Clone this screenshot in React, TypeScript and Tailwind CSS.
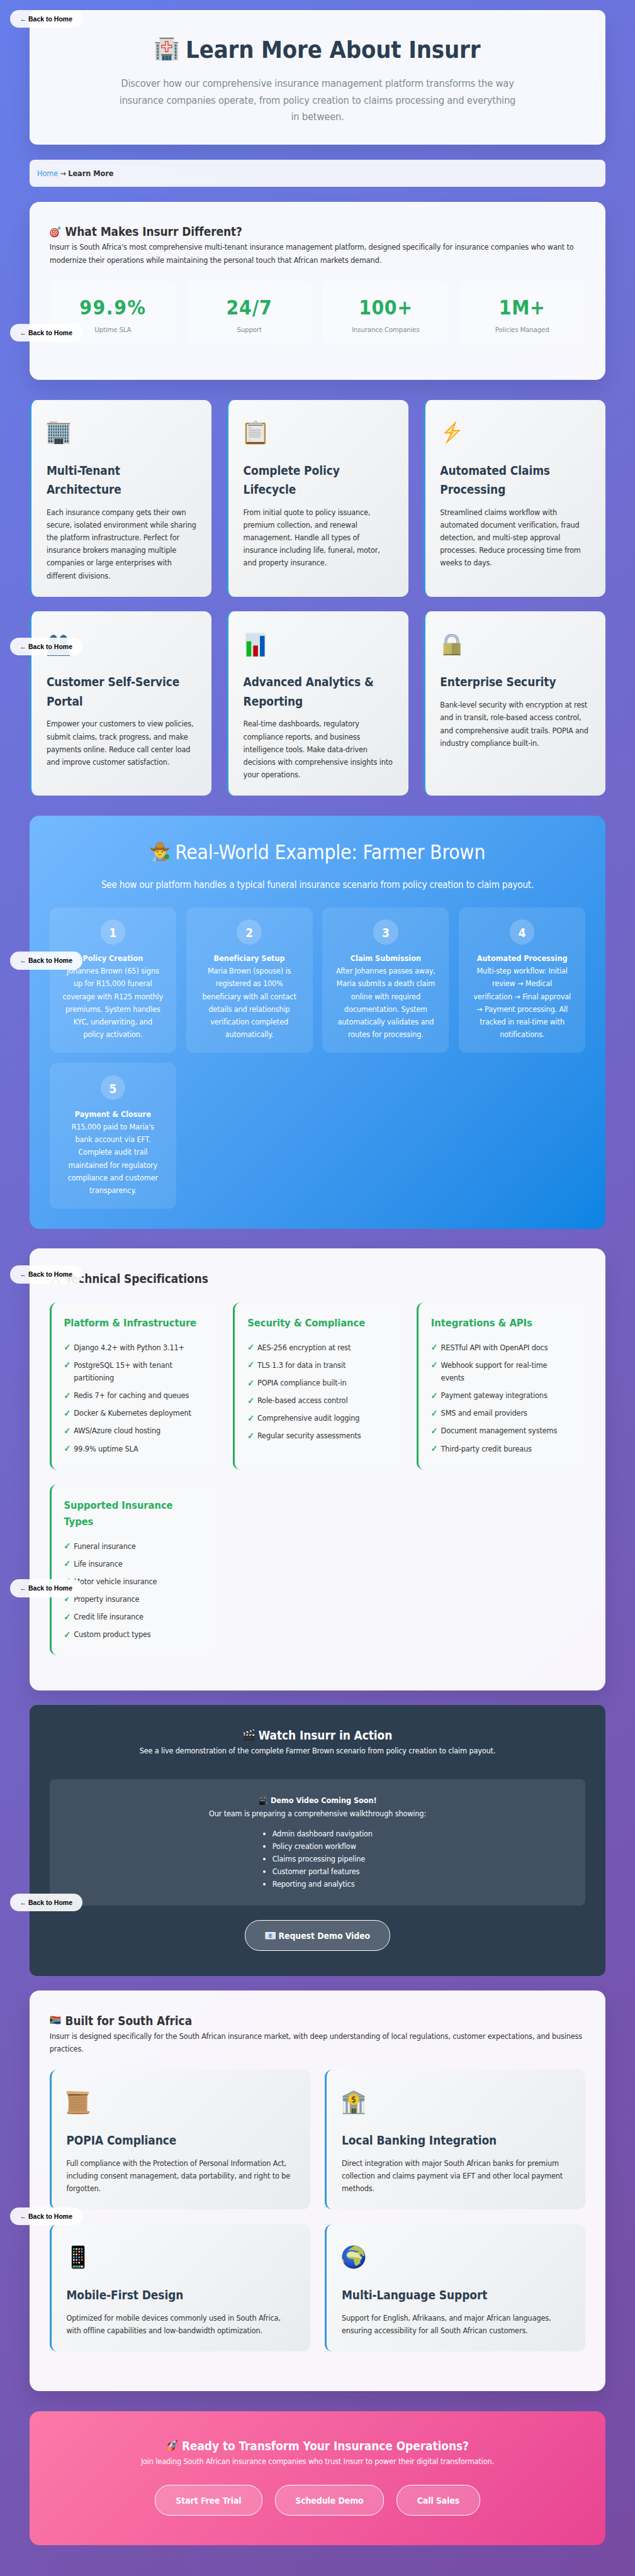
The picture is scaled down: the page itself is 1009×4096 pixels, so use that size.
import type { ReactNode } from "react";

/* Typography helpers: regular and bold text blocks */
const REG = "pt-[0.05em] -mb-[0.05em] tracking-[-0.0128em] whitespace-nowrap";
const BOLD = "pt-[0.05em] -mb-[0.05em] tracking-[-0.003em] font-bold whitespace-nowrap";
const PANEL = "rounded-[20px] bg-white/95 p-10 shadow-[0_20px_40px_rgba(0,0,0,0.1)]";

function Lines({ lines }: { lines: string[] }) {
  return (
    <>
      {lines.map((l) => (
        <span key={l} className="block">
          {l}
        </span>
      ))}
    </>
  );
}

function Icon({ children, className = "h-[1em] w-[1em] align-[-0.12em]" }: { children: ReactNode; className?: string }) {
  return (
    <svg viewBox="0 0 48 48" className={`inline-block ${className}`} aria-hidden="true">
      {children}
    </svg>
  );
}

const range = (n: number) => Array.from({ length: n }, (_, i) => i);

function Hospital() {
  return (
    <Icon>
      <rect x="1.5" y="11" width="9" height="36" fill="#c9c8c3" />
      <rect x="37.5" y="11" width="9" height="36" fill="#c9c8c3" />
      <rect x="0.8" y="10" width="10" height="2" fill="#77726e" />
      <rect x="37.2" y="10" width="10" height="2" fill="#77726e" />
      <rect x="10" y="2" width="28" height="45" fill="#dddcd7" />
      <rect x="9.5" y="1" width="29" height="2.4" fill="#746f6b" />
      {range(5).map((i) => (
        <g key={i} fill="#3d7390">
          <rect x="4.3" y={15 + i * 6.2} width="3.4" height="4.6" />
          <rect x="40.3" y={15 + i * 6.2} width="3.4" height="4.6" />
        </g>
      ))}
      <path d="M21.5 8.8h5v7.7h7.7v5h-7.7v7.7h-5v-7.7h-7.7v-5h7.7z" fill="#f3e9e6" stroke="#e3303a" strokeWidth="1.7" />
      <rect x="13" y="34.5" width="22" height="3" fill="#6b6560" />
      <rect x="14.5" y="37.5" width="19" height="9.5" fill="#2f6079" />
      <path d="M20.5 37.5v9.5M27.5 37.5v9.5" stroke="#7fa0ad" strokeWidth="1" />
    </Icon>
  );
}

function Target() {
  return (
    <Icon>
      <ellipse cx="19" cy="28" rx="18" ry="18.5" fill="#c3241f" />
      <ellipse cx="18" cy="27" rx="13.5" ry="14" fill="#f3efec" />
      <ellipse cx="18" cy="27" rx="10" ry="10.5" fill="#cf2a25" />
      <ellipse cx="18" cy="27" rx="6.5" ry="7" fill="#f3efec" />
      <ellipse cx="18" cy="27" rx="3.4" ry="3.6" fill="#cf2a25" />
      <path d="M18 27 38 11" stroke="#d9a12c" strokeWidth="3" />
      <path d="M32 16l2-9 6-6 1 6 6 1-6 6z" fill="#3fb9c6" />
    </Icon>
  );
}

function Office() {
  return (
    <Icon>
      <rect x="6" y="1.4" width="15" height="4" fill="#cfc6c0" />
      <rect x="2" y="6" width="44.5" height="41" fill="#d5d1cf" />
      <rect x="0.8" y="4.6" width="46.5" height="2.4" fill="#8a807c" />
      {range(6).map((r) =>
        range(9).map((c) => (
          <rect key={`${r}-${c}`} x={3.8 + c * 4.65} y={9 + r * 6} width="3" height="4.7" fill={r === 5 ? "#24475c" : "#38708f"} />
        )),
      )}
      <rect x="14" y="33.5" width="21" height="13.5" fill="#bdb8b5" />
      <rect x="13.5" y="33" width="22" height="3.4" fill="#8c8785" />
      <rect x="16" y="36.5" width="17" height="10.5" fill="#243f4f" />
      <path d="M21.7 36.5v10.5M27.4 36.5v10.5" stroke="#76888f" strokeWidth="0.9" />
    </Icon>
  );
}

function Clipboard() {
  return (
    <Icon>
      <rect x="3.5" y="3.7" width="41" height="44" rx="3" fill="#b9873f" />
      <rect x="6.5" y="7" width="35" height="36" fill="#e9e9e9" />
      <rect x="6.5" y="43" width="35" height="3.5" fill="#7d4d1d" />
      <circle cx="24" cy="3.4" r="2.8" fill="none" stroke="#9eabb8" strokeWidth="1.4" />
      <path d="M11 4.5h26l2 4.5H9z" fill="#b7c3cb" />
      <path d="M9 9h30v1.2H9z" fill="#7a5f45" />
      <path d="M10 14h5.5" stroke="#aaa" strokeWidth="1.6" />
      {range(9).map((i) => (
        <path key={i} d={`M10 ${17.5 + i * 2}h${i % 3 === 1 ? 26 : 24}`} stroke="#c3c3c3" strokeWidth="1.3" />
      ))}
      <path d="M10 38h4M10 40.5h8" stroke="#c3c3c3" strokeWidth="1" />
    </Icon>
  );
}

function Bolt() {
  return (
    <Icon>
      <path d="M33.5 0 8 26l14-.5L10.500 48 42 18.500l-15.500 1z" fill="#fb9f0c" />
      <path d="M29 8 13.500 23.500l13-.8L17 39 36.500 21l-14 .8z" fill="#ffe88c" />
    </Icon>
  );
}

function People() {
  return (
    <Icon>
      <g fill="#3a6b96">
        <ellipse cx="14" cy="15" rx="8" ry="11" />
        <ellipse cx="34" cy="15" rx="8" ry="11" />
        <path d="M1 47c0-13 3-19 13-19s13 6 13 19zM21 47c0-13 3-19 13-19s13 6 13 19z" />
      </g>
    </Icon>
  );
}

function BarChart() {
  return (
    <Icon>
      <rect x="4" y="0.5" width="40" height="47.5" fill="#dbe6ee" />
      <path d="M4 5h40M4 10h40M4 15h40M4 20h40M4 25h40M4 30h40M4 35h40M4 40h40M9 .5v47M14 .5v47M19 .5v47M24 .5v47M29 .5v47M34 .5v47M39 .5v47" stroke="#c3d3df" strokeWidth="0.6" />
      <rect x="6" y="17.5" width="9.5" height="30.5" fill="#0cb817" />
      <rect x="19.5" y="26" width="9.5" height="22" fill="#bf0505" />
      <rect x="33" y="6.5" width="9.5" height="41.5" fill="#0559bd" />
    </Icon>
  );
}

function Lock() {
  return (
    <Icon>
      <defs>
        <linearGradient id="lockBody">
          <stop offset="0" stopColor="#c9c06a" />
          <stop offset="0.48" stopColor="#bdb566" />
          <stop offset="0.52" stopColor="#9c9450" />
          <stop offset="1" stopColor="#a99f59" />
        </linearGradient>
      </defs>
      <path d="M12 23V18.500C12 9 17 5.500 24 5.500S36 9 36 18.500V23" fill="none" stroke="#7e90ac" strokeWidth="5" />
      <path d="M12 23V18.500C12 9 17 5.500 24 5.500S36 9 36 18.500V23" fill="none" stroke="#bcd3ef" strokeWidth="2.6" />
      <rect x="7" y="21" width="34.5" height="24" rx="1" fill="url(#lockBody)" />
      <path d="M7 44.500h34.500" stroke="#5f4b22" strokeWidth="1.6" />
    </Icon>
  );
}

function Farmer() {
  return (
    <Icon>
      <path d="M7 48c1-7 5-10 11-11h12c6 1 10 4 11 11z" fill="#a9cbd6" />
      <path d="M15 48v-9l3-2 3 6h7l3-6 3 2v9z" fill="#6b8fc0" />
      <path d="M19 33h11v6c-3 4-8 4-11 0z" fill="#e5a521" />
      <ellipse cx="24.5" cy="26" rx="13.5" ry="13" fill="#fbc834" />
      <path d="M11 20c2-2 6-4 13-4s11 2 13 4l-1 5c-3-4-6-5-12-5s-9 1-12 5z" fill="#7a4c1c" />
      <path d="M1 14c5 3 9 3 11 2C14 7 17 1 24.500 1S35 7 37 16c3 1 7 0 11-2-2 8-7 10-11 9-4-3-21-3-25 0C7 24 2 21 1 14z" fill="#96692d" />
      <path d="M13 13c3-8 5-11 11.500-11S33 5 36 13c-6 3-17 3-23 0z" fill="#bf8d3e" />
      <circle cx="19" cy="25" r="1.6" fill="#4b3312" />
      <circle cx="30" cy="25" r="1.6" fill="#4b3312" />
      <path d="M21 31.500q3.500 1.500 7 0" stroke="#5d3913" strokeWidth="1.3" fill="none" />
      <path d="M33 42c2-2 7-2 9 0l-3 6h-7z" fill="#ee6a22" />
      <path d="M34 40c0-4 4-9 8-9l2-1 1 3 3 1-2 4 1 3-6 2z" fill="#2f9b3a" />
    </Icon>
  );
}

function Tools() {
  return (
    <Icon>
      <path d="M6 45 34 10M42 45 14 10" stroke="#5b5f63" strokeWidth="5" />
      <path d="M6 10 16 2l8 6-8 8zM34 3l4 6 7-1c0 6-5 9-10 8z" fill="#5b5f63" />
    </Icon>
  );
}

function Clapper() {
  return (
    <Icon>
      <rect x="4" y="22" width="42" height="25" rx="1.5" fill="#2a2a2a" />
      <rect x="4" y="22" width="42" height="6" fill="#e8e8e8" />
      <path d="M6 28l4-6h6l-4 6zM18 28l4-6h6l-4 6zM30 28l4-6h6l-4 6z" fill="#222" />
      <path d="M2 14 44 2l1.500 6L4 21z" fill="#e8e8e8" />
      <path d="M5 13l7-2 5 6-7 2zM19 9l7-2 5 6-7 2zM32 5.500l7-2 5 6-7 2z" fill="#222" />
      <path d="M8 34h34M8 40h34" stroke="#555" strokeWidth="1.5" />
    </Icon>
  );
}

function Camera() {
  return (
    <Icon className="h-[20px] w-[20px] align-[-4px]">
      <circle cx="14" cy="11" r="10" fill="#343a40" stroke="#7f8a92" strokeWidth="1.5" />
      <circle cx="33" cy="10" r="9" fill="#343a40" stroke="#7f8a92" strokeWidth="1.5" />
      <circle cx="14" cy="11" r="4" fill="#9aa4ab" />
      <circle cx="33" cy="10" r="4" fill="#9aa4ab" />
      <path d="M8 20h28v12l10-6v20l-10-5v5H10l-4-8z" fill="#23282d" />
      <path d="M10 22h24v5H10z" fill="#7b868e" />
      <path d="M38 31l7-4v18l-7-4z" fill="#7b868e" />
      <ellipse cx="17" cy="39" rx="11" ry="7" fill="#15181b" />
    </Icon>
  );
}

function Email() {
  return (
    <Icon className="h-[22px] w-[22px] align-[-4px]">
      <rect x="1" y="8" width="46" height="32" rx="1.5" fill="#e4e6e9" />
      <path d="M1 40 18 23M47 40 30 23" stroke="#b9bec4" strokeWidth="1.5" />
      <path d="M1 9l23 20L47 9" fill="#f2f3f5" stroke="#b9bec4" strokeWidth="1.5" />
      <rect x="15" y="13" width="18" height="22" fill="#aecdf0" />
      <text x="24" y="32" textAnchor="middle" fontSize="21" fontWeight="700" fill="#2f7fd6">
        E
      </text>
    </Icon>
  );
}

function Flag() {
  return (
    <Icon>
      <path d="M2 8q11-3 21 0t21 0v15H2z" fill="#d9392f" />
      <path d="M2 23h42v15q-11 3-21 0t-21 0z" fill="#1f3c93" />
      <path d="M2 9 22 19h22v9H22L2 38z" fill="#f3f3f3" />
      <path d="M2 9 21 21h23v5H21L2 38z" fill="#1b8a4d" />
      <path d="M2 13l15 10.500L2 34z" fill="#f0b63a" />
      <path d="M2 16l11 7.500L2 31z" fill="#151515" />
    </Icon>
  );
}

function Scroll() {
  return (
    <Icon>
      <path d="M3 4h40l-.5 36 1 3H4c2-12 1-24-1-36z" fill="#c79763" />
      <path d="M1 4c0-3 2-3 4-3 12 1 26 1 41 2v4C30 8 16 6 3 7.500 1 7.500 1 6 1 4z" fill="#d9ad78" />
      <path d="M4 7.500c13-1 27 1 40 0v2c-13 1-27 0-40 1z" fill="#80532d" />
      <path d="M2 43c13 1 27-1 44-1l1.500-1v3c0 1-1 2-2 3-15 1-29 0-43 0z" fill="#cf9b63" />
      <path d="M3 46.700c15 .5 28 .5 42 0" stroke="#8a5a2f" strokeWidth="1" />
      {range(8).map((i) => (
        <path key={i} d={`M7 ${14 + i * 3.6}q8 1 16 0t16 0`} stroke="#a47648" strokeWidth="0.9" fill="none" />
      ))}
    </Icon>
  );
}

function Bank() {
  return (
    <Icon>
      <path d="M24 1 46 12v4H2v-4z" fill="#9fb1b5" />
      <path d="M24 1 46 12H2z" fill="none" stroke="#71868b" strokeWidth="1.3" />
      <rect x="4" y="16" width="40" height="29" fill="#8b9fa5" />
      <path d="M2 16h44v4.500H2zM2 45h44v2.500H2z" fill="#7b9096" />
      {[3.5, 12, 31.5, 40].map((x) => (
        <rect key={x} x={x} y="22" width="4.5" height="23.5" fill="#eef1f2" stroke="#98a8ac" strokeWidth="0.5" />
      ))}
      <rect x="18" y="34.5" width="12.5" height="12" fill="#d6a91e" />
      <rect x="19.7" y="36" width="9" height="10.5" fill="#2e5563" />
      <path d="M24.200 36v10.500" stroke="#d6a91e" />
      <circle cx="24" cy="18" r="11.3" fill="#f3cb2d" stroke="#d29f17" strokeWidth="0.8" />
      <text x="24" y="24" textAnchor="middle" fontSize="17" fontWeight="700" fill="#72541a">
        $
      </text>
    </Icon>
  );
}

const APP_COLORS = ["#5bd75b", "#ffffff", "#e59df0", "#9a9a9a", "#35b6f2", "#777777", "#e8b48a", "#42cbe0", "#f5e956", "#ffffff", "#ef6565", "#666666", "#42d9e0", "#c44de0", "#35b6f2", "#f28c1c", "#ffffff", "#f5e956", "#777777", "#999999", "#35b6f2", "#ef6565", "#ffffff"];

function Phone() {
  return (
    <Icon>
      <rect x="11" y="0.5" width="26.5" height="47" rx="3" fill="#6c6c6c" />
      <rect x="11.8" y="1.2" width="25" height="45.6" rx="2.4" fill="#050505" />
      {APP_COLORS.map((c, i) => (
        <rect key={i} x={14 + (i % 4) * 5.4} y={6 + Math.floor(i / 4) * 5.5} width="3.2" height="3.4" rx="0.6" fill={c} />
      ))}
      <rect x="13" y="40.5" width="22.5" height="5" fill="#4a4a4a" />
      {["#5bd75b", "#35b6f2", "#5bd75b", "#ffffff"].map((c, i) => (
        <rect key={i} x={14 + i * 5.4} y="41.5" width="3.2" height="3.4" rx="0.6" fill={c} />
      ))}
    </Icon>
  );
}

function Globe() {
  return (
    <Icon>
      <defs>
        <radialGradient id="sea" cx="0.4" cy="0.4" r="0.65">
          <stop offset="0" stopColor="#3f83e8" />
          <stop offset="0.7" stopColor="#1f4fc4" />
          <stop offset="1" stopColor="#112a7c" />
        </radialGradient>
      </defs>
      <circle cx="24" cy="24" r="23.5" fill="url(#sea)" />
      <path d="M10 19c1-4 5-6 9-6 4-1 7 1 10 2l5 0 3 7 4 2c-1 4-4 6-5 9-1 4-3 8-7 8-3-1-3-6-4-9 0-3-2-5-5-5s-6 0-8-3c-2-2-2-3-2-5z" fill="#e6e8a0" />
      <path d="M10 22c4 3 9 1 14 2s10 1 15 2c-2 3-3 4-4 7-1 4-3 8-6 8-3-1-3-6-4-9 0-3-2-5-5-5s-8-1-10-5z" fill="#b3c648" />
      <path d="M15 9c3-3 7-6 12-8 6 1 12 4 16 10 2 4 3 8 3 11l-3 0-3-4-3 0 1 3-3-1-3-6c-3 0-4-1-6-2-3-2-5-1-7 0l-4-1z" fill="#b9c153" />
      <path d="M17 11.500c4-2 6 0 9 .5s6 1 8 1" stroke="#2a60cc" strokeWidth="1.7" fill="none" />
      <path d="M.8 27c3 1 5 5 3.500 10C2 34 .8 31 .8 27zM36 34l2-2-1 6-1.500 1z" fill="#d1bd38" />
    </Icon>
  );
}

function Rocket() {
  return (
    <Icon>
      <path d="M6 44c-3-1 2-12 6-16l9 9c-4 4-9 7-15 7z" fill="#f7a11b" />
      <path d="M14 22 4 26l6-12 12-3zM25 36l-2 11 11-8 3-12z" fill="#b7241f" />
      <path d="M12 29C16 16 26 6 46 2c-3 20-13 30-26 34z" fill="#7d8a98" />
      <path d="M12 29C16 16 26 6 46 2L16 33z" fill="#d3dae1" />
      <path d="M37 4l9-2-2 9c-3 0-7-4-7-7z" fill="#c42a22" />
      <circle cx="30" cy="17" r="4.5" fill="#2d6da3" stroke="#59636d" strokeWidth="1.5" />
    </Icon>
  );
}

interface Feature {
  icon: ReactNode;
  title: string[];
  lines: string[];
}

const features: Feature[] = [
  { icon: <Office />, title: ["Multi-Tenant", "Architecture"], lines: ["Each insurance company gets their own", "secure, isolated environment while sharing", "the platform infrastructure. Perfect for", "insurance brokers managing multiple", "companies or large enterprises with", "different divisions."] },
  { icon: <Clipboard />, title: ["Complete Policy", "Lifecycle"], lines: ["From initial quote to policy issuance,", "premium collection, and renewal", "management. Handle all types of", "insurance including life, funeral, motor,", "and property insurance."] },
  { icon: <Bolt />, title: ["Automated Claims", "Processing"], lines: ["Streamlined claims workflow with", "automated document verification, fraud", "detection, and multi-step approval", "processes. Reduce processing time from", "weeks to days."] },
  { icon: <People />, title: ["Customer Self-Service", "Portal"], lines: ["Empower your customers to view policies,", "submit claims, track progress, and make", "payments online. Reduce call center load", "and improve customer satisfaction."] },
  { icon: <BarChart />, title: ["Advanced Analytics &", "Reporting"], lines: ["Real-time dashboards, regulatory", "compliance reports, and business", "intelligence tools. Make data-driven", "decisions with comprehensive insights into", "your operations."] },
  { icon: <Lock />, title: ["Enterprise Security"], lines: ["Bank-level security with encryption at rest", "and in transit, role-based access control,", "and comprehensive audit trails. POPIA and", "industry compliance built-in."] },
];

const localFeatures: Feature[] = [
  { icon: <Scroll />, title: ["POPIA Compliance"], lines: ["Full compliance with the Protection of Personal Information Act,", "including consent management, data portability, and right to be", "forgotten."] },
  { icon: <Bank />, title: ["Local Banking Integration"], lines: ["Direct integration with major South African banks for premium", "collection and claims payment via EFT and other local payment", "methods."] },
  { icon: <Phone />, title: ["Mobile-First Design"], lines: ["Optimized for mobile devices commonly used in South Africa,", "with offline capabilities and low-bandwidth optimization."] },
  { icon: <Globe />, title: ["Multi-Language Support"], lines: ["Support for English, Afrikaans, and major African languages,", "ensuring accessibility for all South African customers."] },
];

const stats = [
  { value: "99.9%", label: "Uptime SLA", track: "tracking-[0.05em]" },
  { value: "24/7", label: "Support", track: "tracking-[0.03em]" },
  { value: "100+", label: "Insurance Companies", track: "tracking-[0.02em]" },
  { value: "1M+", label: "Policies Managed", track: "tracking-[0.02em]" },
];

const steps = [
  { title: "Policy Creation", lines: ["Johannes Brown (65) signs", "up for R15,000 funeral", "coverage with R125 monthly", "premiums. System handles", "KYC, underwriting, and", "policy activation."] },
  { title: "Beneficiary Setup", lines: ["Maria Brown (spouse) is", "registered as 100%", "beneficiary with all contact", "details and relationship", "verification completed", "automatically."] },
  { title: "Claim Submission", lines: ["After Johannes passes away,", "Maria submits a death claim", "online with required", "documentation. System", "automatically validates and", "routes for processing."] },
  { title: "Automated Processing", lines: ["Multi-step workflow: Initial", "review → Medical", "verification → Final approval", "→ Payment processing. All", "tracked in real-time with", "notifications."] },
  { title: "Payment & Closure", lines: ["R15,000 paid to Maria's", "bank account via EFT.", "Complete audit trail", "maintained for regulatory", "compliance and customer", "transparency."] },
];

const specs = [
  { title: ["Platform & Infrastructure"], items: [["Django 4.2+ with Python 3.11+"], ["PostgreSQL 15+ with tenant", "partitioning"], ["Redis 7+ for caching and queues"], ["Docker & Kubernetes deployment"], ["AWS/Azure cloud hosting"], ["99.9% uptime SLA"]] },
  { title: ["Security & Compliance"], items: [["AES-256 encryption at rest"], ["TLS 1.3 for data in transit"], ["POPIA compliance built-in"], ["Role-based access control"], ["Comprehensive audit logging"], ["Regular security assessments"]] },
  { title: ["Integrations & APIs"], items: [["RESTful API with OpenAPI docs"], ["Webhook support for real-time", "events"], ["Payment gateway integrations"], ["SMS and email providers"], ["Document management systems"], ["Third-party credit bureaus"]] },
  { title: ["Supported Insurance", "Types"], items: [["Funeral insurance"], ["Life insurance"], ["Motor vehicle insurance"], ["Property insurance"], ["Credit life insurance"], ["Custom product types"]] },
];

const demoTopics = ["Admin dashboard navigation", "Policy creation workflow", "Claims processing pipeline", "Customer portal features", "Reporting and analytics"];

function FeatureCard({ icon, title, lines }: Feature) {
  return (
    <div className="rounded-[15px] border-l-[5px] border-[#3498db] bg-linear-135 from-[#f8f9fa] to-[#e9ecef] p-[30px]">
      <div className="h-[76.8px] text-[48px] leading-[76.8px]">{icon}</div>
      <h3 className={`mt-[15px] text-[24px] leading-[38.4px] text-[#2c3e50] ${BOLD}`}>
        <Lines lines={title} />
      </h3>
      <p className={`mt-[15px] ${REG}`}>
        <Lines lines={lines} />
      </p>
    </div>
  );
}

function PillButton({ children, className }: { children: ReactNode; className: string }) {
  return (
    <button className={`flex h-[62.2px] items-center justify-center rounded-[30px] border-2 border-white bg-white/20 text-[17.6px] leading-[28.2px] text-white ${className}`}>
      <span className={BOLD}>{children}</span>
    </button>
  );
}

export default function App() {
  return (
    <div className="relative h-[5195px] overflow-hidden bg-linear-135 from-[#667eea] to-[#764ba2] px-[60px] pt-5 font-['DejaVu_Sans_Condensed','DejaVu_Sans',sans-serif] text-[16px] leading-[25.6px] text-[#333] [font-stretch:condensed] [zoom:0.7884]">
      <header className="rounded-[15px] bg-white/95 p-10 text-center shadow-[0_20px_40px_rgba(0,0,0,0.1)]">
        <h1 className={`text-[48px] leading-[76.8px] text-[#2c3e50] ${BOLD}`}>
          <Hospital /> Learn More About Insurr
        </h1>
        <p className={`mt-[15px] text-[20.8px] leading-[33.28px] text-[#7f8c8d] ${REG}`}>
          <Lines lines={["Discover how our comprehensive insurance management platform transforms the way", "insurance companies operate, from policy creation to claims processing and everything", "in between."]} />
        </p>
      </header>

      <nav className="mt-[30px] rounded-[10px] bg-white/90 p-[15px]">
        <div className={REG}>
          <a className="text-[#3498db]">Home</a> → <strong className="tracking-[-0.003em]">Learn More</strong>
        </div>
      </nav>

      <section className={`mt-[30px] ${PANEL}`}>
        <h2 className={`text-[24px] leading-[38.4px] ${BOLD}`}>
          <Target /> What Makes Insurr Different?
        </h2>
        <p className={REG}>
          <Lines lines={["Insurr is South Africa's most comprehensive multi-tenant insurance management platform, designed specifically for insurance companies who want to", "modernize their operations while maintaining the personal touch that African markets demand."]} />
        </p>
        <div className="mt-[30px] mb-[30px] grid grid-cols-4 gap-5">
          {stats.map((s) => (
            <div key={s.label} className="rounded-[15px] bg-white/30 p-5 text-center">
              <div className={`-mb-[0.05em] pt-[0.05em] text-[40px] leading-[64px] font-bold text-[#27ae60] ${s.track}`}>{s.value}</div>
              <div className={`text-[14.4px] leading-[25.6px] text-[#7f8c8d] ${REG}`}>{s.label}</div>
            </div>
          ))}
        </div>
      </section>

      <section className="mt-10 grid grid-cols-3 gap-[30px]">
        {features.map((f) => (
          <FeatureCard key={f.title[0]} {...f} />
        ))}
      </section>

      <section className="mt-10 rounded-[20px] bg-linear-135 from-[#74b9ff] to-[#0984e3] p-10 text-center text-white">
        <h2 className="-mb-[0.05em] pt-[0.05em] text-[40px] leading-[64px] tracking-[-0.005em]">
          <Farmer /> Real-World Example: Farmer Brown
        </h2>
        <p className={`mt-5 text-[19.2px] leading-[30.7px] ${REG}`}>See how our platform handles a typical funeral insurance scenario from policy creation to claim payout.</p>
        <div className="mt-[30px] grid grid-cols-4 gap-5">
          {steps.map((s, i) => (
            <div key={s.title} className="rounded-[15px] bg-white/10 p-[25px]">
              <div className="mx-auto flex size-[50px] items-center justify-center rounded-full bg-white/20 text-[24px]">
                <span className={BOLD}>{i + 1}</span>
              </div>
              <h4 className={`mt-[15px] ${BOLD}`}>{s.title}</h4>
              <p className={`flex flex-col items-center ${REG}`}>
                <Lines lines={s.lines} />
              </p>
            </div>
          ))}
        </div>
      </section>

      <section className={`mt-10 ${PANEL}`}>
        <h2 className={`text-[24px] leading-[38.4px] ${BOLD}`}>
          <Tools /> Technical Specifications
        </h2>
        <div className="mt-[30px] mb-[30px] grid grid-cols-3 gap-[30px]">
          {specs.map((s) => (
            <div key={s.title[0]} className="rounded-[15px] border-l-4 border-[#27ae60] bg-[#f8f9fa] p-[25px]">
              <h3 className={`text-[20.8px] leading-[33.28px] text-[#27ae60] ${BOLD}`}>
                <Lines lines={s.title} />
              </h3>
              <ul className="mt-[15px]">
                {s.items.map((item) => (
                  <li key={item[0]} className="flex py-[5px]">
                    <span className="w-5 shrink-0 text-[18px] font-bold text-[#27ae60] [-webkit-text-stroke:0.7px_#27ae60]">✓</span>
                    <span className={REG}>
                      <Lines lines={item} />
                    </span>
                  </li>
                ))}
              </ul>
            </div>
          ))}
        </div>
      </section>

      <section className="mt-[30px] rounded-[15px] bg-[#2c3e50] p-10 pb-[50px] text-center text-white">
        <h2 className={`text-[24px] leading-[38.4px] ${BOLD}`}>
          <Clapper /> Watch Insurr in Action
        </h2>
        <p className={REG}>See a live demonstration of the complete Farmer Brown scenario from policy creation to claim payout.</p>
        <div className="mt-[45.5px] rounded-[10px] bg-white/10 p-[30px]">
          <h4 className={BOLD}>
            <Camera /> Demo Video Coming Soon!
          </h4>
          <p className={REG}>Our team is preparing a comprehensive walkthrough showing:</p>
          <ul className={`mx-auto mt-[15px] w-[222px] list-disc pl-5 text-left ${REG}`}>
            {demoTopics.map((t) => (
              <li key={t}>{t}</li>
            ))}
          </ul>
        </div>
        <div className="mt-[30px] flex justify-center">
          <PillButton className="w-[294px]">
            <Email /> Request Demo Video
          </PillButton>
        </div>
      </section>

      <section className={`mt-[30px] ${PANEL}`}>
        <h2 className={`text-[24px] leading-[38.4px] ${BOLD}`}>
          <Flag /> Built for South Africa
        </h2>
        <p className={REG}>
          <Lines lines={["Insurr is designed specifically for the South African insurance market, with deep understanding of local regulations, customer expectations, and business", "practices."]} />
        </p>
        <div className="mt-[30px] mb-10 grid grid-cols-2 gap-[30px]">
          {localFeatures.map((f) => (
            <FeatureCard key={f.title[0]} {...f} />
          ))}
        </div>
      </section>

      <section className="mt-10 rounded-[20px] bg-linear-135 from-[#fd79a8] to-[#e84393] px-10 pt-[50px] pb-[60px] text-center text-white">
        <h2 className={`text-[24px] leading-[38.4px] ${BOLD}`}>
          <Rocket /> Ready to Transform Your Insurance Operations?
        </h2>
        <p className={REG}>Join leading South African insurance companies who trust Insurr to power their digital transformation.</p>
        <div className="mt-[35px] flex justify-center gap-[25px]">
          <PillButton className="w-[217px]">Start Free Trial</PillButton>
          <PillButton className="w-[220px]">Schedule Demo</PillButton>
          <PillButton className="w-[169px]">Call Sales</PillButton>
        </div>
      </section>

      {/* Floating navigation pill, one per viewport height */}
      <div className="absolute top-5 left-5 flex flex-col gap-[597.1px]">
        {range(8).map((i) => (
          <a key={i} className="flex h-9 w-[146px] items-center justify-center rounded-[18px] bg-white/90 font-['Liberation_Sans',Arial,sans-serif] text-[13.333px] font-bold whitespace-nowrap text-black">
            ← Back to Home
          </a>
        ))}
      </div>
    </div>
  );
}
